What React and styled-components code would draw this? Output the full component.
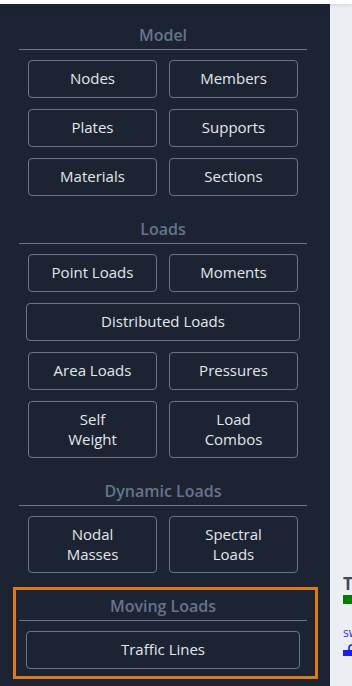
import React from "react";
import styled, { createGlobalStyle } from "styled-components";

const GlobalStyle = createGlobalStyle`
  html, body {
    margin: 0;
    padding: 0;
    background: #ebeef2;
    font-family: "Open Sans", "Noto Sans", sans-serif;
  }
`;

const Page = styled.div`
  display: flex;
  flex-direction: column;
  width: 352px;
  height: 686px;
  overflow: hidden;
`;

const TopBar = styled.div`
  height: 4px;
  flex: none;
  background: #ffffff;
  box-shadow: 0 1px 4px rgba(0, 0, 0, 0.12);
  position: relative;
  z-index: 2;
`;

const Body = styled.div`
  display: flex;
  flex: 1;
  min-height: 0;
`;

const Sidebar = styled.aside`
  width: 330px;
  flex: none;
  background: #1c2433;
  padding: 12px 0 0 0;
  box-sizing: border-box;
  display: flex;
  flex-direction: column;
  gap: 4px;
`;

const Section = styled.section`
  margin: 0 12px 0 13px;
  padding: 0 8px 7px 3px;
  border: 3px solid ${(p) => (p.$active ? "#e27a12" : "transparent")};
`;

const Heading = styled.h3`
  margin: 0;
  height: 31px;
  box-sizing: border-box;
  padding-top: 4px;
  border-bottom: 1px solid #6b7688;
  text-align: center;
  font-size: 16px;
  line-height: 24px;
  font-weight: 600;
  color: #66748b;
`;

const Grid = styled.div`
  display: grid;
  grid-template-columns: 1fr 1fr;
  column-gap: 8px;
  row-gap: 11px;
  padding: 10px 7px 0;
`;

const Btn = styled.button`
  grid-column: ${(p) => (p.$wide ? "1 / span 2" : "auto")};
  margin: ${(p) => (p.$wide ? "0" : "0 2px")};
  padding: 8px 4px;
  min-height: 38px;
  background: transparent;
  border: 1px solid #6b7587;
  border-radius: 4px;
  color: #e3e6ea;
  font-family: inherit;
  font-size: 15px;
  line-height: 19.5px;
  text-align: center;
  cursor: pointer;
`;

const Main = styled.main`
  flex: 1;
  background: #ebeef2;
  padding: 570px 0 0 13px;
  display: flex;
  flex-direction: column;
  overflow: hidden;
`;

const LegendTitle = styled.div`
  font-size: 17px;
  font-weight: 700;
  color: #444a52;
  line-height: 20px;
  white-space: nowrap;
`;

const Swatch = styled.div`
  width: 12px;
  height: 9px;
  margin-top: 1px;
  background: ${(p) => p.$color};
`;

const LinkText = styled.div`
  margin-top: 22px;
  font-size: 12px;
  color: #2a2aff;
  line-height: 14px;
  white-space: nowrap;
`;

const sections = [
  {
    title: "Model",
    items: [["Nodes"], ["Members"], ["Plates"], ["Supports"], ["Materials"], ["Sections"]],
  },
  {
    title: "Loads",
    items: [
      ["Point Loads"],
      ["Moments"],
      ["Distributed Loads", true],
      ["Area Loads"],
      ["Pressures"],
      ["Self\nWeight"],
      ["Load\nCombos"],
    ],
  },
  {
    title: "Dynamic Loads",
    items: [["Nodal\nMasses"], ["Spectral\nLoads"]],
  },
  {
    title: "Moving Loads",
    active: true,
    items: [["Traffic Lines", true]],
  },
];

function Label({ text }) {
  const parts = text.split("\n");
  return parts.map((t, i) => (
    <React.Fragment key={i}>
      {t}
      {i < parts.length - 1 && <br />}
    </React.Fragment>
  ));
}

export default function App() {
  return (
    <Page>
      <GlobalStyle />
      <TopBar />
      <Body>
        <Sidebar>
          {sections.map((s) => (
            <Section key={s.title} $active={s.active}>
              <Heading>{s.title}</Heading>
              <Grid>
                {s.items.map(([label, wide]) => (
                  <Btn key={label} $wide={wide}>
                    <Label text={label} />
                  </Btn>
                ))}
              </Grid>
            </Section>
          ))}
        </Sidebar>
        <Main>
          <LegendTitle>Traffic</LegendTitle>
          <Swatch $color="#008000" />
          <LinkText>switch</LinkText>
          <svg width="14" height="12" viewBox="0 0 14 12" style={{ marginTop: 4 }}>
            <rect x="0" y="6" width="14" height="6" fill="#1a1aff" />
            <path d="M6 7 V4 a3 3 0 0 1 6 0 V7" fill="none" stroke="#1a1aff" strokeWidth="1.6" />
          </svg>
        </Main>
      </Body>
    </Page>
  );
}
